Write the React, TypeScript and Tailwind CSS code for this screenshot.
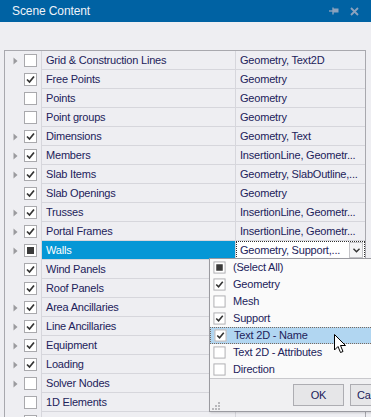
import React from "react";

type State = "on" | "off" | "ind";
type Row = { name: string; value: string; exp: boolean; state: State; selected?: boolean };

const rows: Row[] = [
  { name: "Grid & Construction Lines", value: "Geometry, Text2D", exp: true, state: "off" },
  { name: "Free Points", value: "Geometry", exp: false, state: "on" },
  { name: "Points", value: "Geometry", exp: false, state: "off" },
  { name: "Point groups", value: "Geometry", exp: false, state: "off" },
  { name: "Dimensions", value: "Geometry, Text", exp: true, state: "on" },
  { name: "Members", value: "InsertionLine, Geometr...", exp: true, state: "on" },
  { name: "Slab Items", value: "Geometry, SlabOutline,...", exp: true, state: "on" },
  { name: "Slab Openings", value: "Geometry", exp: false, state: "on" },
  { name: "Trusses", value: "InsertionLine, Geometr...", exp: true, state: "on" },
  { name: "Portal Frames", value: "InsertionLine, Geometr...", exp: true, state: "on" },
  { name: "Walls", value: "Geometry, Support,...", exp: true, state: "ind", selected: true },
  { name: "Wind Panels", value: "", exp: false, state: "on" },
  { name: "Roof Panels", value: "", exp: false, state: "on" },
  { name: "Area Ancillaries", value: "", exp: true, state: "on" },
  { name: "Line Ancillaries", value: "", exp: true, state: "on" },
  { name: "Equipment", value: "", exp: true, state: "on" },
  { name: "Loading", value: "", exp: true, state: "on" },
  { name: "Solver Nodes", value: "", exp: true, state: "off" },
  { name: "1D Elements", value: "", exp: false, state: "off" },
  { name: "", value: "", exp: false, state: "off" },
];

const popupItems: { label: string; state: State; hot?: boolean }[] = [
  { label: "(Select All)", state: "ind" },
  { label: "Geometry", state: "on" },
  { label: "Mesh", state: "off" },
  { label: "Support", state: "on" },
  { label: "Text 2D - Name", state: "on", hot: true },
  { label: "Text 2D - Attributes", state: "off" },
  { label: "Direction", state: "off" },
];

function Check({ state }: { state: State }) {
  return (
    <div className="w-[13px] h-[13px] border border-[#a9a9ad] bg-white flex items-center justify-center shrink-0">
      {state === "on" && (
        <svg width="11" height="11" viewBox="0 0 11 11">
          <path d="M2 5.5 L4.5 8 L9 2.5" fill="none" stroke="#333333" strokeWidth="1.7" />
        </svg>
      )}
      {state === "ind" && <div className="w-[7px] h-[7px] bg-[#3a3a3a]" />}
    </div>
  );
}

function Arrow() {
  return (
    <svg width="5" height="8" viewBox="0 0 5 8">
      <path d="M0.5 0.5 L4.5 4 L0.5 7.5 Z" fill="#9a9a9e" />
    </svg>
  );
}

export default function App() {
  const font = { fontFamily: '"Liberation Sans", Arial, sans-serif' };
  return (
    <div
      className="relative w-[371px] h-[417px] overflow-hidden bg-[#eeeef2] flex flex-col text-[11px] tracking-[-0.2px] text-[#22225a]"
      style={font}
    >
      {/* title bar */}
      <div className="h-[22px] shrink-0 bg-[#0062a3] flex items-center pl-[12px] pr-[12px]">
        <span className="text-[12px] tracking-[-0.1px] text-[#eef3f9] flex-1">Scene Content</span>
        <svg width="10" height="8" viewBox="0 0 10 8" className="mr-[11px]">
          <path d="M0 4 H4" stroke="#8ba2bd" strokeWidth="1.4" />
          <path d="M4 0.5 V7.5" stroke="#8ba2bd" strokeWidth="1.4" />
          <rect x="4" y="1.5" width="5.5" height="4" fill="#8ba2bd" />
        </svg>
        <svg width="9" height="9" viewBox="0 0 9 9">
          <path d="M1 1 L8 8 M8 1 L1 8" stroke="#8ba2bd" strokeWidth="1.8" />
        </svg>
      </div>
      <div className="h-[28px] shrink-0" />

      {/* grid */}
      <div className="ml-[4px] w-[362px] border-l border-t border-r border-[#a8a8ae] flex flex-col">
        {rows.map((r, i) => (
          <div key={i} className="flex h-[19px] shrink-0">
            <div className="w-[36px] flex items-center">
              <div className="w-[19px] pl-[8px] flex items-center">{r.exp && <Arrow />}</div>
              <Check state={r.state} />
            </div>
            <div
              className={`w-[194px] border-l border-b border-[#d6d6dc] flex items-center pl-[4px] ${
                r.selected ? "bg-[#0597d6] text-white" : ""
              }`}
            >
              {r.name}
            </div>
            {r.selected ? (
              <div className="flex-1 border-l border-b border-[#d6d6dc] bg-white flex">
                <div className="flex-1 border border-dotted border-[#303030] flex items-center pl-[3px]">
                  <span className="flex-1">{r.value}</span>
                  <div className="w-[14px] h-[16px] border border-[#c4c4c8] bg-[#f4f4f6] flex items-center justify-center mr-[1px]">
                    <svg width="7" height="5" viewBox="0 0 7 5">
                      <path d="M0.5 0.8 L3.5 3.8 L6.5 0.8" fill="none" stroke="#303030" strokeWidth="1.4" />
                    </svg>
                  </div>
                </div>
              </div>
            ) : (
              <div className="flex-1 border-l border-b border-[#d6d6dc] flex items-center pl-[4px] whitespace-nowrap overflow-hidden">
                {r.value}
              </div>
            )}
          </div>
        ))}
      </div>

      {/* dropdown popup */}
      <div className="absolute left-[209px] top-[258px] w-[175px] h-[154px] border border-[#9a9aa0] bg-[#fafafa] flex flex-col shadow-[1px_1px_2px_rgba(0,0,0,0.15)]">
        <div className="flex flex-col">
          {popupItems.map((it, i) => (
            <div
              key={i}
              className={`h-[17px] flex items-center pl-[3px] ${
                it.hot ? "bg-[#b1d6f1] border border-dotted border-[#7a6a60] pl-[2px]" : ""
              }`}
            >
              <div className="w-[20px] flex items-center">
                <div className="scale-[0.93]">
                  <Check state={it.state} />
                </div>
              </div>
              <span>{it.label}</span>
            </div>
          ))}
        </div>
        <div className="flex-1 border-t border-[#c8c8cc] bg-[#f0f0f2] relative">
          <div className="flex gap-[6px] pl-[83px] pt-[5px]">
            <div className="w-[51px] shrink-0 h-[22px] border border-[#adadb2] bg-[#e6e6e8] flex items-center justify-center">
              OK
            </div>
            <div className="w-[75px] shrink-0 h-[22px] border border-[#adadb2] bg-[#e6e6e8] flex items-center pl-[6px]">
              Cancel
            </div>
          </div>
          <div className="absolute left-[2px] bottom-[1px] grid grid-cols-3 gap-[1px]">
            <div className="w-[2px] h-[2px]" />
            <div className="w-[2px] h-[2px]" />
            <div className="w-[2px] h-[2px] bg-[#b8b8bc]" />
            <div className="w-[2px] h-[2px]" />
            <div className="w-[2px] h-[2px] bg-[#b8b8bc]" />
            <div className="w-[2px] h-[2px] bg-[#b8b8bc]" />
            <div className="w-[2px] h-[2px] bg-[#b8b8bc]" />
            <div className="w-[2px] h-[2px] bg-[#b8b8bc]" />
            <div className="w-[2px] h-[2px] bg-[#b8b8bc]" />
          </div>
        </div>
      </div>

      {/* mouse cursor */}
      <svg className="absolute left-[334px] top-[334px]" width="13" height="20" viewBox="0 0 13 20">
        <path
          d="M0.5 0.5 L0.5 16 L4 12.5 L6.5 18.5 L9 17.5 L6.5 11.5 L11.5 11.5 Z"
          fill="white"
          stroke="black"
          strokeWidth="1"
          strokeLinejoin="round"
        />
      </svg>
    </div>
  );
}
